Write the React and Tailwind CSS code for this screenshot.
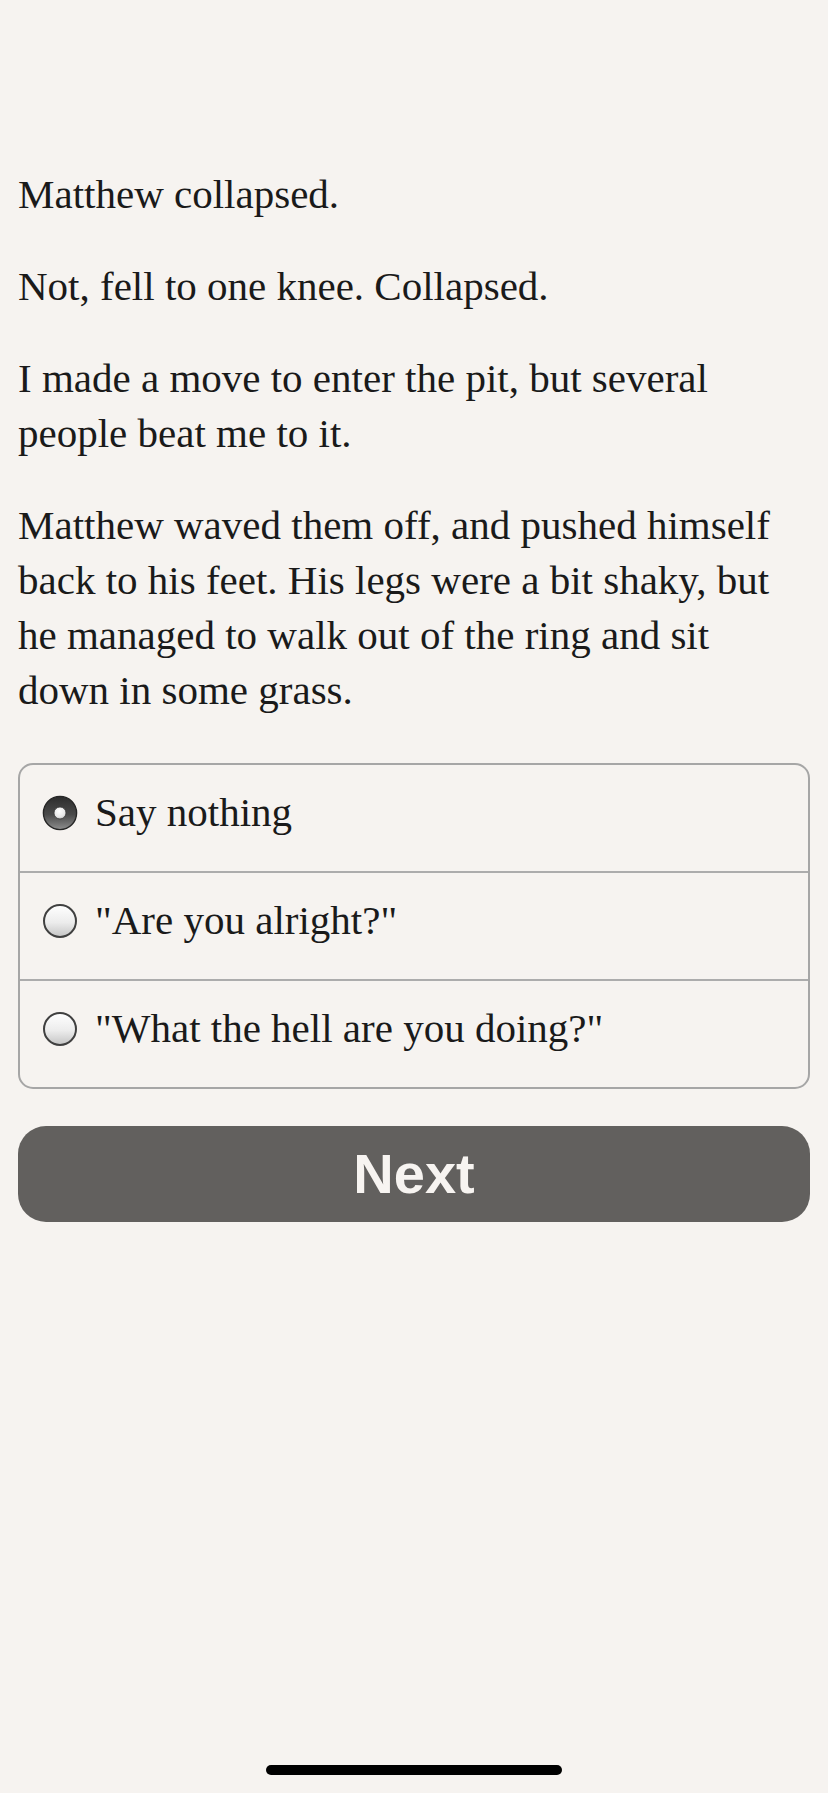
import React, { useState } from "react";

const paragraphs = [
  ["Matthew collapsed."],
  ["Not, fell to one knee. Collapsed."],
  ["I made a move to enter the pit, but several people beat me to it."],
  [
    "Matthew waved them off, and pushed himself back to his feet. His legs were a bit shaky, but he managed to walk out of the ring and sit down in some grass.",
  ],
];

const choices = [
  "Say nothing",
  "\"Are you alright?\"",
  "\"What the hell are you doing?\"",
];

const Radio = ({ checked, id }) => {
  if (checked) {
    return (
      <svg width="36" height="36" viewBox="0 0 36 36" className="shrink-0">
        <defs>
          <linearGradient id={`ring-${id}`} x1="0" y1="0" x2="0" y2="1">
            <stop offset="0%" stopColor="#2c2c2c" />
            <stop offset="55%" stopColor="#4a4a4a" />
            <stop offset="100%" stopColor="#8e8e8e" />
          </linearGradient>
          <radialGradient id={`dot-${id}`} cx="0.45" cy="0.35" r="0.7">
            <stop offset="0%" stopColor="#ffffff" />
            <stop offset="70%" stopColor="#e6e6e6" />
            <stop offset="100%" stopColor="#a8a8a8" />
          </radialGradient>
        </defs>
        <circle cx="18" cy="18" r="16.6" fill={`url(#ring-${id})`} stroke="#262626" strokeWidth="1.4" />
        <circle cx="18" cy="18" r="6" fill={`url(#dot-${id})`} stroke="#3a3a3a" strokeWidth="0.8" />
      </svg>
    );
  }
  return (
    <svg width="36" height="36" viewBox="0 0 36 36" className="shrink-0">
      <defs>
        <linearGradient id={`fill-${id}`} x1="0" y1="0" x2="0" y2="1">
          <stop offset="0%" stopColor="#ffffff" />
          <stop offset="55%" stopColor="#ececec" />
          <stop offset="100%" stopColor="#c4c4c4" />
        </linearGradient>
      </defs>
      <circle cx="18" cy="18" r="16" fill={`url(#fill-${id})`} stroke="#404040" strokeWidth="2" />
    </svg>
  );
};

const App = () => {
  const [selected, setSelected] = useState(0);

  return (
    <div className="min-h-[1793px] flex flex-col bg-[#f6f3f0] px-[18px] pt-[167px] font-['Liberation_Serif',serif] text-[#1a1a1a]">
      <div className="pr-[12px]">
        {paragraphs.map((p, i) => (
          <p
            key={i}
            className={`text-[41px] leading-[55px] ${i === paragraphs.length - 1 ? "mb-[45px]" : "mb-[37px]"}`}
          >
            {p[0]}
          </p>
        ))}
      </div>

      <div className="rounded-[15px] border-2 border-[#a6a6a6] overflow-hidden">
        {choices.map((c, i) => (
          <div
            key={i}
            onClick={() => setSelected(i)}
            className={`flex items-center gap-[17px] pl-[22px] pt-[20px] pb-[31px] cursor-pointer ${i > 0 ? "h-[108px] border-t-2 border-[#acacac]" : "h-[106px]"}`}
          >
            <Radio checked={selected === i} id={i} />
            <span className="text-[41px] leading-[55px]">{c}</span>
          </div>
        ))}
      </div>

      <button
        type="button"
        className="mt-[37px] h-[96px] w-full rounded-[28px] bg-[#62605e] font-['Liberation_Sans',Arial,sans-serif] text-[56px] font-bold leading-none text-[#f7f4f1]"
      >
        Next
      </button>

      <div className="mt-auto mb-[18px] flex justify-center">
        <div className="h-[10px] w-[296px] rounded-full bg-black" />
      </div>
    </div>
  );
};

export default App;
